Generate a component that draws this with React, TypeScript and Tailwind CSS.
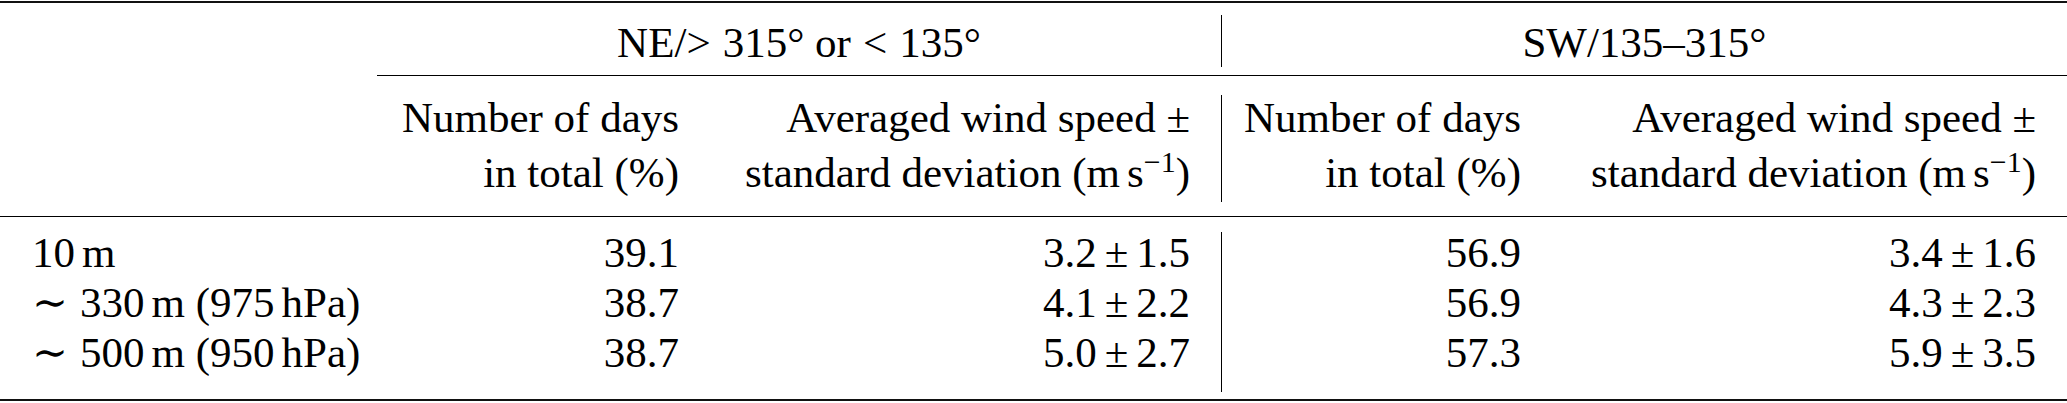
import React from "react";

function Sup({ children }: { children: React.ReactNode }) {
  return <span className="relative -top-[15px] text-[30px] leading-none">{children}</span>;
}

function PM({ a, b }: { a: string; b: string }) {
  return (
    <span>
      {a}
      <span className="mx-[8px]">±</span>
      {b}
    </span>
  );
}

function VLine({ cls }: { cls: string }) {
  return <div className={`w-px shrink-0 bg-black ${cls}`} />;
}

const rows = [
  { label: <>10<span className="ml-[7px]">m</span></>, a: "39.1", b: ["3.2", "1.5"], c: "56.9", d: ["3.4", "1.6"] },
  {
    label: (
      <>
        <span className="mr-[12px]">∼</span>330<span className="ml-[7px]">m</span> (975<span className="ml-[7px]">hPa)</span>
      </>
    ),
    a: "38.7",
    b: ["4.1", "2.2"],
    c: "56.9",
    d: ["4.3", "2.3"],
  },
  {
    label: (
      <>
        <span className="mr-[12px]">∼</span>500<span className="ml-[7px]">m</span> (950<span className="ml-[7px]">hPa)</span>
      </>
    ),
    a: "38.7",
    b: ["5.0", "2.7"],
    c: "57.3",
    d: ["5.9", "3.5"],
  },
];

export default function App() {
  return (
    <div className="w-[2067px] h-[403px] bg-white text-black text-[43px] overflow-hidden font-['Liberation_Serif','Times_New_Roman','DejaVu_Serif',serif]">
      <div className="h-px" />
      <div className="h-[2px] bg-[#111]" />
      {/* group header */}
      <div className="flex h-[72px]">
        <div className="w-[377px] shrink-0" />
        <div className="w-[844px] shrink-0 text-center leading-[50px] pt-[15px]">
          NE/<span className="mr-[12px]">&gt;</span>315° or<span className="mx-[12px]">&lt;</span>135°
        </div>
        <VLine cls="mt-[12px] mb-[8px]" />
        <div className="flex-1 text-center leading-[50px] pt-[15px]">SW/135–315°</div>
      </div>
      <div className="ml-[377px] h-px bg-black" />
      {/* column headers */}
      <div className="flex h-[140px] leading-[55px]">
        <div className="w-[377px] shrink-0" />
        <div className="w-[334px] shrink-0 text-right pr-[32px] pt-[14px]">
          <div>Number of days</div>
          <div>in total (%)</div>
        </div>
        <div className="w-[510px] shrink-0 text-right pr-[31px] pt-[14px]">
          <div>Averaged wind speed ±</div>
          <div>
            standard deviation (m<span className="ml-[7px]">s</span>
            <Sup>−1</Sup>)
          </div>
        </div>
        <VLine cls="mt-[19px] mb-[14px]" />
        <div className="w-[331px] shrink-0 text-right pr-[32px] pt-[14px]">
          <div>Number of days</div>
          <div>in total (%)</div>
        </div>
        <div className="flex-1 text-right pr-[31px] pt-[14px]">
          <div>Averaged wind speed ±</div>
          <div>
            standard deviation (m<span className="ml-[7px]">s</span>
            <Sup>−1</Sup>)
          </div>
        </div>
      </div>
      <div className="h-px bg-black" />
      {/* data */}
      <div className="flex h-[182px] leading-[50px]">
        <div className="w-[377px] shrink-0 pl-[32px] pt-[11px]">
          {rows.map((r, i) => (
            <div key={i}>{r.label}</div>
          ))}
        </div>
        <div className="w-[334px] shrink-0 text-right pr-[32px] pt-[11px]">
          {rows.map((r, i) => (
            <div key={i}>{r.a}</div>
          ))}
        </div>
        <div className="w-[510px] shrink-0 text-right pr-[31px] pt-[11px]">
          {rows.map((r, i) => (
            <div key={i}>
              <PM a={r.b[0]} b={r.b[1]} />
            </div>
          ))}
        </div>
        <VLine cls="mt-[15px] mb-[7px]" />
        <div className="w-[331px] shrink-0 text-right pr-[32px] pt-[11px]">
          {rows.map((r, i) => (
            <div key={i}>{r.c}</div>
          ))}
        </div>
        <div className="flex-1 text-right pr-[31px] pt-[11px]">
          {rows.map((r, i) => (
            <div key={i}>
              <PM a={r.d[0]} b={r.d[1]} />
            </div>
          ))}
        </div>
      </div>
      <div className="h-[2px] bg-[#111]" />
    </div>
  );
}
